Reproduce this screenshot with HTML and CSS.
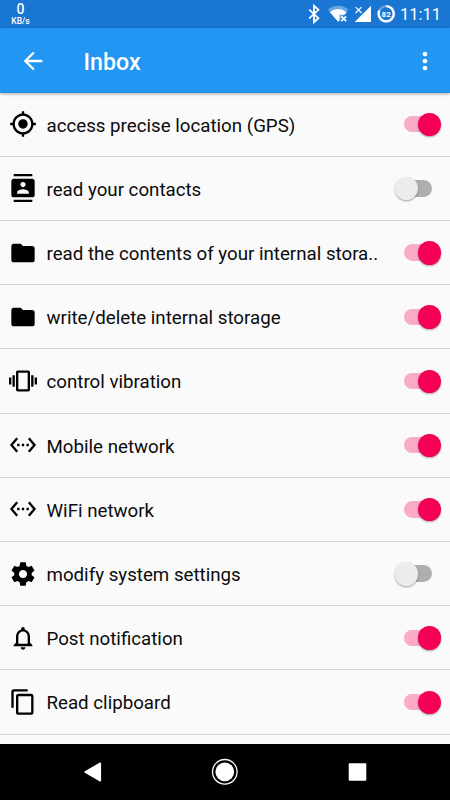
FILE: index.html
```
<!DOCTYPE html>
<html lang="en">
<head>
<meta charset="utf-8">
<title>Inbox</title>
<link rel="stylesheet" href="styles.css">
</head>
<body>
<svg class="defs" width="0" height="0" aria-hidden="true">
  <symbol id="gps" viewBox="0 0 24 24"><path d="M12 8c-2.21 0-4 1.79-4 4s1.79 4 4 4 4-1.79 4-4-1.79-4-4-4zm8.94 3c-.46-4.17-3.77-7.48-7.94-7.94V1h-2v2.06C6.83 3.52 3.52 6.83 3.06 11H1v2h2.06c.46 4.17 3.77 7.48 7.94 7.94V23h2v-2.06c4.17-.46 7.48-3.77 7.94-7.94H23v-2h-2.06zM12 19c-3.87 0-7-3.13-7-7s3.13-7 7-7 7 3.13 7 7-3.13 7-7 7z"/></symbol>
  <symbol id="contacts" viewBox="0 0 24 24"><path d="M20 0H4v2h16V0zM4 24h16v-2H4v2zM20 4H4c-1.1 0-2 .9-2 2v12c0 1.1.9 2 2 2h16c1.1 0 2-.9 2-2V6c0-1.1-.9-2-2-2zm-8 2.75c1.24 0 2.25 1.01 2.25 2.25s-1.01 2.25-2.25 2.25S9.75 10.24 9.75 9 10.76 6.75 12 6.75zM17 17H7v-1.5c0-1.67 3.33-2.5 5-2.5s5 .83 5 2.5V17z"/></symbol>
  <symbol id="folder" viewBox="0 0 24 24"><path d="M10 4H4c-1.1 0-1.99.9-1.99 2L2 18c0 1.1.9 2 2 2h16c1.1 0 2-.9 2-2V8c0-1.1-.9-2-2-2h-8l-2-2z"/></symbol>
  <symbol id="vibration" viewBox="0 0 24 24"><path d="M0 15h2V9H0v6zm3 2h2V7H3v10zm19-8v6h2V9h-2zm-3 8h2V7h-2v10zM16.5 3h-9C6.67 3 6 3.67 6 4.5v15c0 .83.67 1.5 1.5 1.5h9c.83 0 1.5-.67 1.5-1.5v-15c0-.83-.67-1.5-1.5-1.5zM16 19H8V5h8v14z"/></symbol>
  <symbol id="network" viewBox="0 0 24 24"><path d="M7.77 6.76L6.23 5.48.82 12l5.41 6.52 1.54-1.28L3.42 12l4.35-5.24zM7 13h2v-2H7v2zm10-2h-2v2h2v-2zm-6 2h2v-2h-2v2zm6.77-7.52l-1.54 1.28L20.58 12l-4.35 5.24 1.54 1.28L23.18 12l-5.41-6.52z"/></symbol>
  <symbol id="gear" viewBox="0 0 24 24"><path d="M19.43 12.98c.04-.32.07-.64.07-.98s-.03-.66-.07-.98l2.11-1.65c.19-.15.24-.42.12-.64l-2-3.46c-.12-.22-.39-.3-.61-.22l-2.49 1c-.52-.4-1.08-.73-1.69-.98l-.38-2.65C14.46 2.18 14.25 2 14 2h-4c-.25 0-.46.18-.49.42l-.38 2.65c-.61.25-1.17.59-1.69.98l-2.49-1c-.23-.09-.49 0-.61.22l-2 3.46c-.13.22-.07.49.12.64l2.11 1.65c-.04.32-.07.65-.07.98s.03.66.07.98l-2.11 1.65c-.19.15-.24.42-.12.64l2 3.46c.12.22.39.3.61.22l2.49-1c.52.4 1.08.73 1.69.98l.38 2.65c.03.24.24.42.49.42h4c.25 0 .46-.18.49-.42l.38-2.65c.61-.25 1.17-.59 1.69-.98l2.49 1c.23.09.49 0 .61-.22l2-3.46c.12-.22.07-.49-.12-.64l-2.11-1.65zM12 15.5c-1.93 0-3.5-1.57-3.5-3.5s1.57-3.5 3.5-3.5 3.5 1.57 3.5 3.5-1.57 3.5-3.5 3.5z"/></symbol>
  <symbol id="bell" viewBox="0 0 24 24"><path d="M12 22c1.1 0 2-.9 2-2h-4c0 1.1.9 2 2 2zm6-6v-5c0-3.07-1.63-5.64-4.5-6.32V4c0-.83-.67-1.5-1.5-1.5s-1.5.67-1.5 1.5v.68C7.64 5.36 6 7.92 6 11v5l-2 2v1h16v-1l-2-2zm-2 1H8v-6c0-2.48 1.51-4.5 4-4.5s4 2.02 4 4.5v6z"/></symbol>
  <symbol id="copy" viewBox="0 0 24 24"><path d="M16 1H4c-1.1 0-2 .9-2 2v14h2V3h12V1zm3 4H8c-1.1 0-2 .9-2 2v14c0 1.1.9 2 2 2h11c1.1 0 2-.9 2-2V7c0-1.1-.9-2-2-2zm0 16H8V7h11v14z"/></symbol>
</svg>
<div class="screen">
  <header class="status">
    <div class="speed"><span class="speed-value">0</span><span class="speed-unit">KB/s</span></div>
    <div class="status-right">
      <svg class="status-icons" width="90" height="28" viewBox="306 0 90 28">
        <path class="line" d="M309.2 9.6l9.2 8.6-4.4 4V5.8l4.4 4-9.2 8.6" stroke-width="1.8"/>
        <path d="M338.2 21.8L328 9.6a15.6 15.6 0 0 1 20.4 0z" fill="#fff" opacity=".35"/>
        <path d="M338.2 21.8L329.8 12.2a13 13 0 0 1 16.8 0l-2 2.6h-5.1v6.2z" fill="#fff"/>
        <path class="line" d="M341.3 16.3l4.8 4.8m0-4.8l-4.8 4.8" stroke-width="1.7"/>
        <path d="M371 5.7V22H354.7z" fill="#fff"/>
        <path class="line" d="M355.7 7.2l5.8 5.8m0-5.8l-5.8 5.8" stroke-width="1.2"/>
        <circle class="line" cx="386.2" cy="13.8" r="7.6" stroke-width="2.3" opacity=".35"/>
        <circle class="line" cx="386.2" cy="13.8" r="7.6" stroke-width="2.3" pathLength="100" stroke-dasharray="82 18" transform="rotate(-90 386.2 13.8)"/>
        <text class="battery" x="386.2" y="16.7" text-anchor="middle">82</text>
      </svg>
      <span class="clock">11:11</span>
    </div>
  </header>
  <div class="appbar">
    <svg class="back" width="28" height="28" viewBox="0 0 24 24"><path d="M20 11H7.83l5.59-5.59L12 4l-8 8 8 8 1.41-1.41L7.83 13H20v-2z"/></svg>
    <h1 class="title">Inbox</h1>
    <svg class="more" width="28" height="28" viewBox="0 0 24 24"><path d="M12 8c1.1 0 2-.9 2-2s-.9-2-2-2-2 .9-2 2 .9 2 2 2zm0 2c-1.1 0-2 .9-2 2s.9 2 2 2 2-.9 2-2-.9-2-2-2zm0 6c-1.1 0-2 .9-2 2s.9 2 2 2 2-.9 2-2-.9-2-2-2z"/></svg>
  </div>
  <main class="list">
    <div class="row"><svg class="icon"><use href="#gps"/></svg><span class="label">access precise location (GPS)</span><span class="switch on"></span></div>
    <div class="row"><svg class="icon"><use href="#contacts"/></svg><span class="label">read your contacts</span><span class="switch"></span></div>
    <div class="row"><svg class="icon"><use href="#folder"/></svg><span class="label">read the contents of your internal stora..</span><span class="switch on"></span></div>
    <div class="row"><svg class="icon"><use href="#folder"/></svg><span class="label">write/delete internal storage</span><span class="switch on"></span></div>
    <div class="row"><svg class="icon"><use href="#vibration"/></svg><span class="label">control vibration</span><span class="switch on"></span></div>
    <div class="row"><svg class="icon"><use href="#network"/></svg><span class="label">Mobile network</span><span class="switch on"></span></div>
    <div class="row"><svg class="icon"><use href="#network"/></svg><span class="label">WiFi network</span><span class="switch on"></span></div>
    <div class="row"><svg class="icon"><use href="#gear"/></svg><span class="label">modify system settings</span><span class="switch"></span></div>
    <div class="row"><svg class="icon"><use href="#bell"/></svg><span class="label">Post notification</span><span class="switch on"></span></div>
    <div class="row"><svg class="icon"><use href="#copy"/></svg><span class="label">Read clipboard</span><span class="switch on"></span></div>
  </main>
  <nav class="navbar">
    <svg width="28" height="28" viewBox="0 0 28 28"><path d="M6.2 14L21.3 5.3v17.4z" stroke="#fff" stroke-width="1.6" stroke-linejoin="round"/></svg>
    <svg width="28" height="28" viewBox="0 0 28 28"><circle cx="13.8" cy="13.8" r="9.4"/><circle class="line" cx="13.8" cy="13.8" r="12.3" stroke-width="1.3"/></svg>
    <svg width="28" height="28" viewBox="0 0 28 28"><rect x="4.7" y="5.2" width="17.6" height="17.6" rx="1"/></svg>
  </nav>
</div>
</body>
</html>
```
FILE: styles.css
```
* { box-sizing: border-box; }
body {
  margin: 0;
  font-family: Roboto, "Liberation Sans", sans-serif;
}
.defs { display: none; }
.screen {
  width: 450px;
  height: 800px;
  display: flex;
  flex-direction: column;
  overflow: hidden;
  background: #fafafa;
}
.status {
  flex: none;
  height: 28px;
  display: flex;
  justify-content: space-between;
  padding: 0 9px 0 10px;
  background: #1976d2;
  color: #fff;
}
.speed {
  width: 21px;
  display: flex;
  flex-direction: column;
  align-items: center;
  padding-top: 2px;
  font-weight: 500;
}
.speed-value { font-size: 14px; line-height: 15px; }
.speed-unit { font-size: 8.5px; line-height: 8px; }
.status-right { display: flex; align-items: center; }
.clock {
  width: 45px;
  text-align: right;
  font-size: 16.5px;
  line-height: 28px;
  white-space: nowrap;
  padding-top: 2px;
}
.line { fill: none; stroke: #fff; }
.battery { font-size: 8px; font-weight: 700; fill: #fff; }
.appbar {
  flex: none;
  height: 65px;
  display: flex;
  align-items: center;
  padding: 0 11.5px 0 18.5px;
  background: #2196f3;
  color: #fff;
  box-shadow: 0 1px 3px rgba(0, 0, 0, .35);
  z-index: 1;
}
.back, .more { fill: #fff; }
.title {
  flex: 1;
  margin: 2px 0 0 37px;
  font-size: 23.2px;
  font-weight: 500;
  line-height: 28px;
}
.list {
  flex: 1;
  min-height: 0;
  overflow: hidden;
  margin-top: -.5px;
}
.row {
  height: 64.23px;
  display: flex;
  align-items: center;
  padding: 0 18px 0 9px;
  border-bottom: 1px solid #d4d4d4;
}
.icon { width: 28px; height: 28px; flex: none; }
.label {
  flex: 1;
  margin-left: 9.5px;
  font-size: 18.72px;
  line-height: 24px;
  white-space: nowrap;
  color: #0b0b0b;
  padding-top: 2.8px;
}
.switch {
  position: relative;
  flex: none;
  width: 28px;
  height: 16.5px;
  border-radius: 9px;
  background: #aeaeae;
}
.switch::after {
  content: "";
  position: absolute;
  left: -9px;
  top: -3.2px;
  width: 23.4px;
  height: 23.4px;
  border-radius: 50%;
  background: #ececec;
  box-shadow: 0 1px 2px rgba(0, 0, 0, .35);
}
.switch.on { background: #f9abc7; }
.switch.on::after { left: 14px; background: #f50057; }
.navbar {
  flex: none;
  height: 56px;
  display: flex;
  justify-content: center;
  align-items: center;
  gap: 104.5px;
  background: #000;
}
.navbar svg { fill: #fff; }
```
